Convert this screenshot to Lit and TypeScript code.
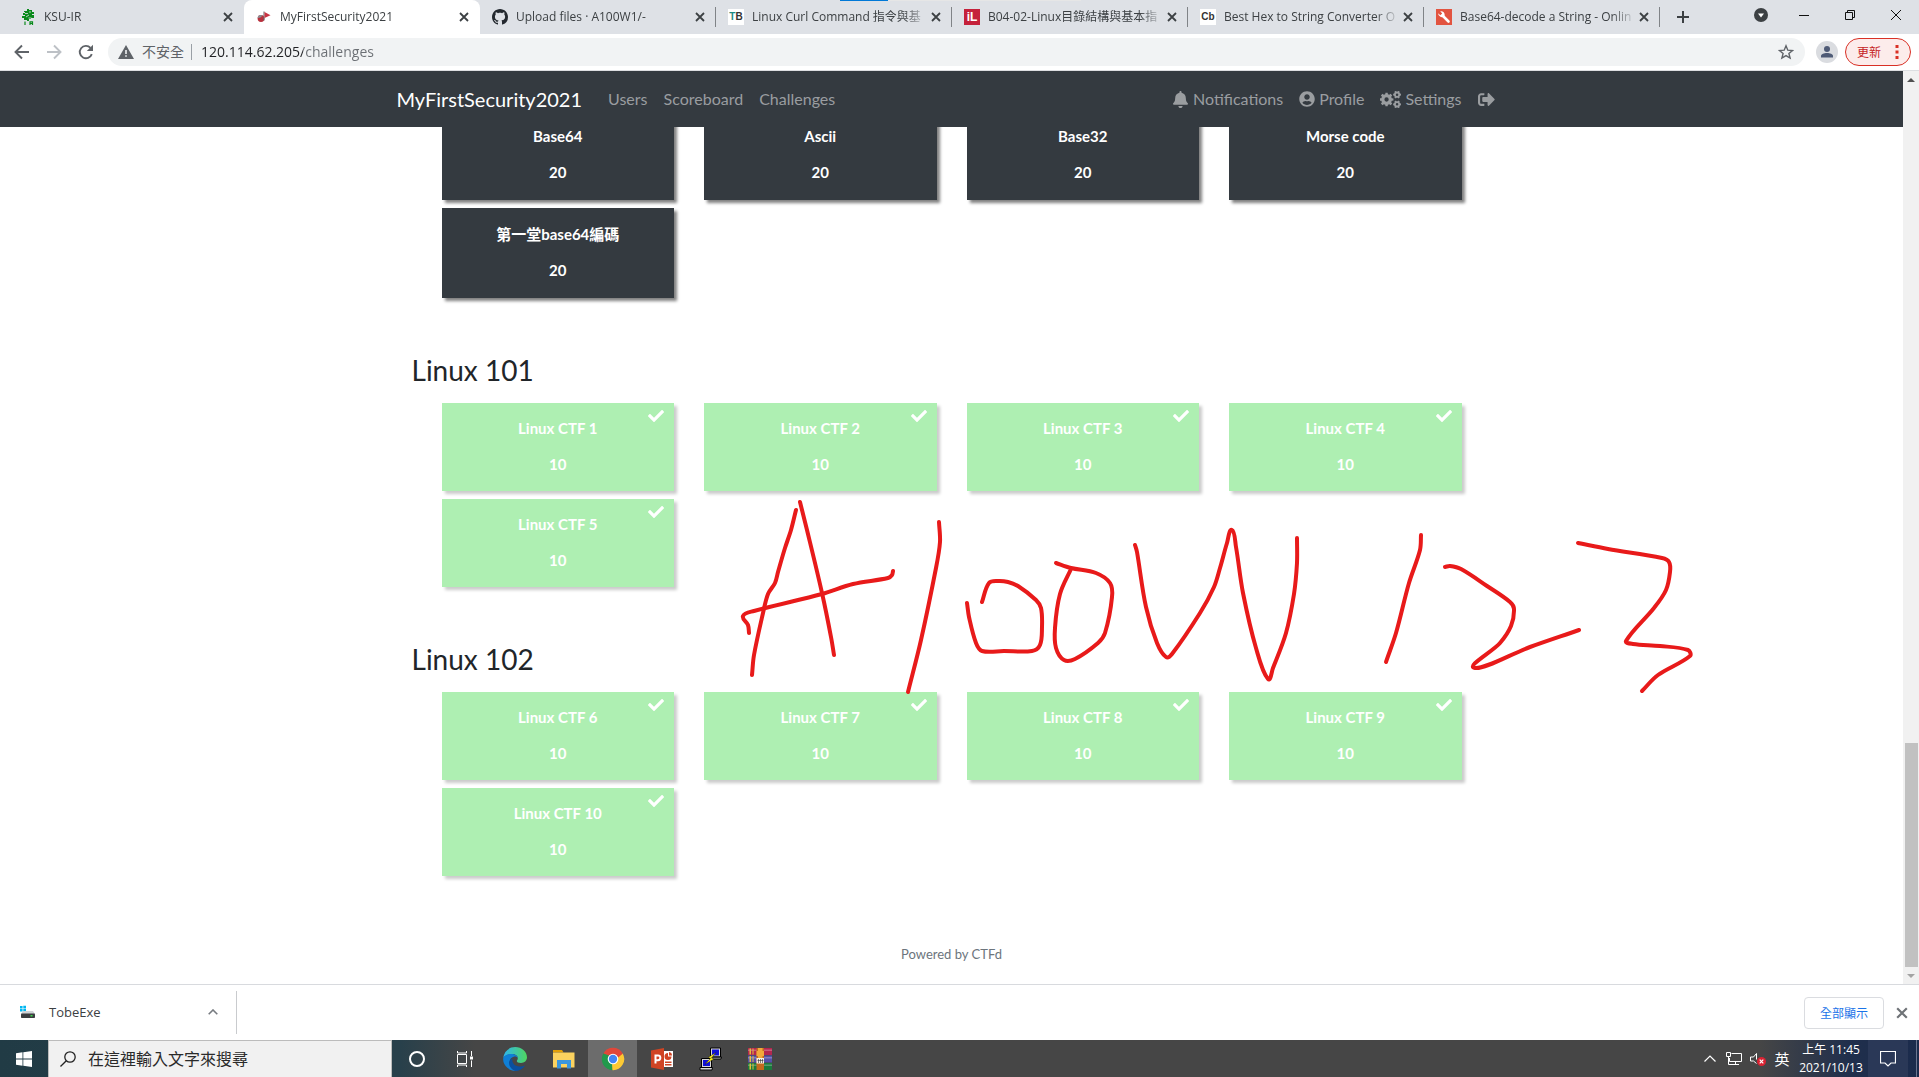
import { LitElement, html, css, svg, nothing, TemplateResult } from "lit";
import { customElement, property } from "lit/decorators.js";

interface Tab {
  title: string;
  icon: TemplateResult;
  active?: boolean;
}

interface Challenge {
  name: string;
  value: number;
  solved: boolean;
}

interface Category {
  title: string;
  challenges: Challenge[];
}

/** Closed outline of a gear wheel, centred on cx, cy. */
function gear(cx: number, cy: number, outer: number, inner: number, teeth: number): string {
  const points: string[] = [];
  const step = (Math.PI * 2) / teeth;
  for (let i = 0; i < teeth; i++) {
    const a = i * step;
    for (const [offset, r] of [[-0.32, inner], [-0.2, outer], [0.2, outer], [0.32, inner]]) {
      const t = a + offset * step;
      points.push(`${(cx + Math.cos(t) * r).toFixed(1)} ${(cy + Math.sin(t) * r).toFixed(1)}`);
    }
  }
  return `M${points.join("L")}Z`;
}

function hole(cx: number, cy: number, r: number): string {
  return `M${cx - r} ${cy}a${r} ${r} 0 1 0 ${2 * r} 0a${r} ${r} 0 1 0 ${-2 * r} 0Z`;
}

function icon(viewBox: string, width: number, height: number, body: unknown): TemplateResult {
  return html`<svg viewBox=${viewBox} width=${width} height=${height} aria-hidden="true">${body}</svg>`;
}

const closeIcon = (size: number) =>
  icon("0 0 10 10", size, size, svg`<path d="M1 1L9 9M9 1L1 9" fill="none" stroke="currentColor" stroke-width="1.8"/>`);

const bell = icon("0 0 448 512", 17, 17, svg`<path fill="currentColor" d="M224 512c35.32 0 63.97-28.65 63.97-64H160.03c0 35.35 28.65 64 63.97 64zm215.39-149.71c-19.32-20.76-55.47-51.99-55.47-154.29 0-77.7-54.48-139.9-127.94-155.16V32c0-17.67-14.32-32-31.98-32s-31.98 14.33-31.98 32v20.84C118.56 68.1 64.08 130.3 64.08 208c0 102.3-36.15 133.53-55.47 154.29-6 6.45-8.66 14.16-8.61 21.71.11 16.4 12.98 32 32.1 32h383.8c19.12 0 32-15.6 32.1-32 .05-7.55-2.61-15.27-8.61-21.71z"/>`);

const userCircle = icon("0 0 496 512", 16, 16, svg`<path fill="currentColor" d="M248 8C111 8 0 119 0 256s111 248 248 248 248-111 248-248S385 8 248 8zm0 96c48.6 0 88 39.4 88 88s-39.4 88-88 88-88-39.4-88-88 39.4-88 88-88zm0 344c-58.7 0-111.3-26.6-146.5-68.2 18.8-35.4 55.6-59.8 98.5-59.8 2.4 0 4.8.4 7.1 1.1 13 4.2 26.6 6.9 40.9 6.9 14.3 0 28-2.7 40.9-6.9 2.3-.7 4.7-1.1 7.1-1.1 42.9 0 79.7 24.4 98.5 59.8C359.3 421.4 306.7 448 248 448z"/>`);

const cogs = icon("0 0 640 512", 21, 17, svg`<path fill="currentColor" fill-rule="evenodd" d="${gear(200, 256, 212, 164, 8)}${hole(200, 256, 66)}${gear(520, 108, 122, 96, 6)}${hole(520, 108, 38)}${gear(520, 404, 122, 96, 6)}${hole(520, 404, 38)}"/>`);

const signOut = icon("0 0 512 512", 17, 17, svg`<path fill="currentColor" d="M497 273L329 441c-15 15-41 4.5-41-17v-96H152c-13.3 0-24-10.7-24-24v-96c0-13.3 10.7-24 24-24h136V88c0-21.4 25.9-32 41-17l168 168c9.3 9.4 9.3 24.6 0 34zM192 436v-40c0-6.6-5.4-12-12-12H96c-17.7 0-32-14.3-32-32V160c0-17.7 14.3-32 32-32h84c6.6 0 12-5.4 12-12V76c0-6.6-5.4-12-12-12H96c-53 0-96 43-96 96v192c0 53 43 96 96 96h84c6.6 0 12-5.4 12-12z"/>`);

const check = icon("0 0 512 512", 16, 16, svg`<path fill="currentColor" d="M173.898 439.404l-166.4-166.4c-9.997-9.997-9.997-26.206 0-36.204l36.203-36.204c9.997-9.998 26.207-9.998 36.204 0L192 312.69 432.095 72.596c9.997-9.997 26.207-9.997 36.204 0l36.203 36.204c9.997 9.997 9.997 26.206 0 36.204l-294.4 294.401c-9.998 9.997-26.207 9.997-36.204-.001z"/>`);

const pineIcon = icon("0 0 16 16", 16, 16, svg`
  <path fill="#0a8a1c" d="M7 0h2v1h3v2h2v2h-2v1h2v3h-3v1H9v2H7v-1H4V9H2V7h3V6H3V4h2V3H4V2h3z"/>
  <path stroke="#dee1e6" stroke-width=".8" d="M5 4.500h3M9 3h2M6 8l3-2M8.500 9h3" fill="none"/>
  <path stroke="#0a8a1c" stroke-width="1.200" fill="none" d="M5 12.500V16M10 16v-3.200h2.500V16M10 14.500h2.500"/>`);

const flagIcon = icon("0 0 16 16", 16, 16, svg`
  <circle cx="5" cy="9.500" r="3.400" fill="#b8303c"/>
  <path d="M1.600 9a3.400 3.400 0 0 1 5-2.600L4.500 8.500z" fill="#8b9095"/>
  <path d="M8 2.500v9" stroke="#666" stroke-width="1"/>
  <path d="M8.500 3L14.500 6.300 8.500 9z" fill="#c93443"/>`);

const githubIcon = icon("0 0 16 16", 16, 16, svg`<path fill="#24292f" d="M8 0C3.580 0 0 3.580 0 8c0 3.540 2.290 6.530 5.470 7.590.4.070.550-.170.550-.380 0-.190-.010-.820-.010-1.490-2.010.370-2.530-.490-2.690-.940-.090-.230-.480-.940-.820-1.130-.280-.150-.680-.520-.010-.530.630-.010 1.080.580 1.230.820.720 1.210 1.870.870 2.330.660.070-.520.280-.870.510-1.070-1.780-.200-3.640-.890-3.640-3.950 0-.870.310-1.590.820-2.150-.080-.200-.360-1.020.080-2.120 0 0 .670-.210 2.200.820.640-.180 1.320-.270 2-.270s1.360.090 2 .270c1.530-1.040 2.200-.820 2.200-.820.440 1.100.160 1.920.080 2.120.510.560.820 1.270.820 2.150 0 3.070-1.870 3.750-3.650 3.950.290.250.540.730.540 1.480 0 1.070-.010 1.930-.010 2.200 0 .210.150.460.550.380A8.010 8.010 0 0 0 16 8c0-4.420-3.580-8-8-8z"/>`);

const wrenchIcon = icon("0 0 16 16", 16, 16, svg`<path fill="#e25440" d="M0 0h16v16H0z"/><path d="M7 7l5.500 5.500" stroke="#fff" stroke-width="2.600" stroke-linecap="round"/><path fill="#fff" d="M2.200 4.200L4.300 6.300 6.200 4.400 4.200 2.300a3.600 3.600 0 0 1 4.300 4.600A3.600 3.600 0 0 1 2.200 4.200z"/>`);

const tabs: Tab[] = [
  { title: "KSU-IR", icon: pineIcon },
  { title: "MyFirstSecurity2021", icon: flagIcon, active: true },
  { title: "Upload files · A100W1/-", icon: githubIcon },
  { title: "Linux Curl Command 指令與基", icon: html`<span class="letters tb"><i>T</i>B</span>` },
  { title: "B04-02-Linux目錄結構與基本指", icon: html`<span class="letters il">iL</span>` },
  { title: "Best Hex to String Converter O", icon: html`<span class="letters cb">Cb</span>` },
  { title: "Base64-decode a String - Onlin", icon: wrenchIcon },
];

const linux = (from: number, to: number): Challenge[] =>
  Array.from({ length: to - from + 1 }, (_, i) => ({ name: `Linux CTF ${from + i}`, value: 10, solved: true }));

const encoding: Challenge[] = ["Base64", "Ascii", "Base32", "Morse code", "第一堂base64編碼"].map((name) => ({
  name,
  value: 20,
  solved: false,
}));

const categories: Category[] = [
  { title: "", challenges: encoding },
  { title: "Linux 101", challenges: linux(1, 5) },
  { title: "Linux 102", challenges: linux(6, 10) },
];

/** Pen strokes: each list is the points one stroke passes through. */
const strokes: number[][][] = [
  [[796, 510], [791, 530], [785, 548], [778, 572], [775, 583], [768, 594], [763, 613], [754, 655], [752, 675]],
  [[800, 502], [807, 530], [822, 593], [831, 637], [834, 655]],
  [[749, 633], [748, 625], [743, 616], [754, 611], [822, 594], [853, 584], [888, 578], [892, 575], [893, 571]],
  [[939, 522], [940, 542], [936, 568], [921, 640], [908, 692]],
  [[967, 603], [969, 617], [976, 643], [982, 651], [1004, 651], [1032, 651], [1040, 645], [1042, 627], [1041, 608], [1036, 600], [1018, 586], [1008, 582], [998, 581], [989, 583], [982, 602]],
  [[1056, 563], [1071, 568], [1096, 573], [1110, 583], [1112, 597], [1105, 633], [1098, 643], [1075, 659], [1064, 660], [1056, 648], [1055, 628], [1060, 594], [1071, 569]],
  [[1135, 545], [1137, 552], [1146, 607], [1157, 643], [1166, 657], [1172, 654], [1200, 613], [1214, 587], [1220, 568], [1227, 543], [1232, 530], [1236, 547], [1243, 593], [1256, 648], [1268, 679], [1273, 668], [1286, 633], [1294, 594], [1297, 563], [1297, 538]],
  [[1421, 535], [1420, 550], [1409, 583], [1396, 633], [1386, 662]],
  [[1445, 567], [1450, 566], [1461, 569], [1487, 586], [1510, 602], [1514, 609], [1511, 626], [1500, 643], [1475, 668], [1530, 647], [1579, 630]],
  [[1578, 543], [1608, 549], [1662, 558], [1669, 562], [1670, 572], [1666, 590], [1654, 608], [1626, 641], [1633, 644], [1660, 646], [1688, 650], [1690, 656], [1658, 675], [1642, 691]],
];

/** Catmull-Rom spline through the points, written as cubic segments. */
function spline(p: number[][]): string {
  let d = `M${p[0][0]} ${p[0][1]}`;
  for (let i = 0; i < p.length - 1; i++) {
    const [a, b, c, e] = [p[i - 1] ?? p[i], p[i], p[i + 1], p[i + 2] ?? p[i + 1]];
    const len = Math.hypot(c[0] - b[0], c[1] - b[1]);
    const t1 = Math.min(1, len / (Math.hypot(c[0] - a[0], c[1] - a[1]) || 1)) / 3;
    const t2 = Math.min(1, len / (Math.hypot(e[0] - b[0], e[1] - b[1]) || 1)) / 3;
    const c1 = [b[0] + (c[0] - a[0]) * t1, b[1] + (c[1] - a[1]) * t1];
    const c2 = [c[0] - (e[0] - b[0]) * t2, c[1] - (e[1] - b[1]) * t2];
    d += `C${[...c1, ...c2, ...c].map((v) => v.toFixed(1)).join(" ")}`;
  }
  return d;
}

const uiFont = css`"Open Sans", "Noto Sans CJK TC", sans-serif`;

@customElement("browser-chrome")
export class BrowserChrome extends LitElement {
  static styles = css`
    :host { display: block; font-family: ${uiFont}; font-size: 12px; color: #3c4043; }
    svg { display: block; flex: none; }
    button { border: 0; padding: 0; background: none; color: inherit; font: inherit; display: flex; align-items: center; justify-content: center; }
    .strip { display: flex; height: 34px; background: #dee1e6; position: relative; }
    .progress { position: absolute; left: 840px; top: 0; width: 241px; height: 1px; background: linear-gradient(to right, #0078d7 48px, #e6e6e6 48px); }
    .tab { flex: 0 1 236px; min-width: 0; box-sizing: border-box; display: flex; align-items: center; padding: 0 8px 0 12px; position: relative; }
    .tab:first-child { flex-basis: 244px; padding-left: 20px; }
    .tab.ruled::after { content: ""; position: absolute; right: 0; top: 7px; width: 1px; height: 20px; background: #808387; }
    .tab.active { background: #fff; border-radius: 8px 8px 0 0; }
    .label { flex: 1; min-width: 0; margin-left: 8px; line-height: 20px; white-space: nowrap; overflow: hidden; mask-image: linear-gradient(to right, #000 86%, transparent); }
    .close { width: 16px; height: 16px; }
    .letters { width: 16px; height: 16px; flex: none; background: #fff; font: bold 10px/16px "Liberation Sans", sans-serif; text-align: center; color: #333; }
    .letters i { color: #1d8a84; font-style: normal; }
    .letters.il { background: #c5213b; color: #fff; font-size: 12px; }
    .add { width: 46px; }
    .window { margin-left: auto; display: flex; align-items: center; padding-bottom: 4px; color: #111; }
    .window button { width: 46px; height: 28px; }
    .window .menu { width: 40px; }
    .toolbar { display: flex; align-items: center; height: 36px; background: #fff; border-bottom: 1px solid #dcdee1; color: #5f6368; padding-right: 8px; }
    .nav { width: 32px; height: 28px; }
    .nav:first-child { margin-left: 6px; }
    .nav.off { color: #bdc1c6; }
    .address { flex: 1; margin-left: 6px; height: 28px; border-radius: 14px; background: #f1f3f4; display: flex; align-items: center; padding: 0 11px 0 10px; }
    .unsafe { font-size: 14px; line-height: 20px; margin: 0 7px 0 8px; }
    .bar { width: 1px; height: 16px; background: #9aa0a6; margin-right: 9px; }
    .url { flex: 1; min-width: 0; border: 0; padding: 0; outline: 0; height: 20px; font: 14px/20px ${uiFont}; color: #202124; background: linear-gradient(to right, #202124 102px, #6b6f74 102px) text; -webkit-text-fill-color: transparent; }
    .avatar { width: 22px; height: 22px; border-radius: 50%; background: #dadce0; margin: 0 7px 0 11px; }
    .update { box-sizing: border-box; height: 28px; width: 66px; border: 1px solid #d93025; border-radius: 14px; background: #fceceb; color: #c5221f; gap: 14px; }
  `;

  render() {
    return html`
      <div class="strip">
        ${tabs.map(
          (t, i) => html`<div class="tab ${t.active ? "active" : ""} ${i > 1 ? "ruled" : ""}">
            ${t.icon}<span class="label">${t.title}</span>
            <button class="close" aria-label="Close tab">${closeIcon(10)}</button>
          </div>`
        )}
        <button class="add" aria-label="New tab">${icon("0 0 12 12", 12, 12, svg`<path d="M6 0V12M0 6H12" stroke="currentColor" stroke-width="2"/>`)}</button>
        <div class="window">
          <button class="menu" aria-label="Search tabs">${icon("0 0 14 14", 14, 14, svg`<circle cx="7" cy="7" r="7" fill="#3c4043"/><path d="M4 5.500h6L7 9.500z" fill="#fff"/>`)}</button>
          <button aria-label="Minimize">${icon("0 0 10 10", 10, 10, svg`<path d="M0 5.500H10" stroke="currentColor"/>`)}</button>
          <button aria-label="Restore">${icon("0 0 10 10", 10, 10, svg`<path d="M.5 2.500h7v7h-7zM2.500 2.500V.5h7v7h-2" fill="none" stroke="currentColor"/>`)}</button>
          <button aria-label="Close">${icon("0 0 10 10", 10, 10, svg`<path d="M0 0L10 10M10 0L0 10" stroke="currentColor"/>`)}</button>
        </div>
        <div class="progress"></div>
      </div>
      <div class="toolbar">
        <button class="nav" aria-label="Back">${icon("0 0 16 16", 16, 16, svg`<path d="M15 8H2M8 1.500L1.500 8 8 14.500" fill="none" stroke="currentColor" stroke-width="1.900"/>`)}</button>
        <button class="nav off" aria-label="Forward">${icon("0 0 16 16", 16, 16, svg`<path d="M1 8H14M8 1.500L14.500 8 8 14.500" fill="none" stroke="currentColor" stroke-width="1.900"/>`)}</button>
        <button class="nav" aria-label="Reload">${icon("0 0 16 16", 16, 16, svg`<path d="M13.800 10.200A6.200 6.200 0 1 1 12.500 3.800" fill="none" stroke="currentColor" stroke-width="1.900"/><path d="M15 .8V7H8.800z" fill="currentColor"/>`)}</button>
        <div class="address">
          ${icon("0 0 16 14", 16, 14, svg`<path fill="currentColor" fill-rule="evenodd" d="M8 0L16 14H0zM7.200 5v4h1.600V5zM7.200 10.200v1.600h1.600v-1.600z"/>`)}
          <span class="unsafe">不安全</span><span class="bar"></span>
          <input class="url" aria-label="Address" value="120.114.62.205/challenges" />
          <button aria-label="Bookmark">${icon("0 0 16 16", 16, 16, svg`<path d="M8 1.800l1.800 4.400 4.700.3-3.600 3 1.200 4.600L8 11.600l-4.100 2.500 1.200-4.600-3.600-3 4.700-.3z" fill="none" stroke="currentColor" stroke-width="1.400"/>`)}</button>
        </div>
        <button class="avatar" aria-label="Account">${icon("0 0 14 14", 14, 14, svg`<circle cx="7" cy="4" r="3" fill="#4f5b76"/><path d="M1 12.500V11c0-2 3-3 6-3s6 1 6 3v1.500z" fill="#4f5b76"/>`)}</button>
        <button class="update">更新${icon("0 0 4 14", 4, 14, svg`<path fill="#d93025" d="M.5 0h3v3h-3zM.5 5.500h3v3h-3zM.5 11h3v3h-3z"/>`)}</button>
      </div>`;
  }
}

@customElement("challenge-card")
export class ChallengeCard extends LitElement {
  @property() name = "";
  @property({ type: Number }) value = 0;
  @property({ type: Boolean }) solved = false;

  static styles = css`
    :host { display: block; }
    .card { width: 100%; box-sizing: border-box; position: relative; display: flex; flex-direction: column; gap: 15px; padding: 15px 16px 16px; border: 1px solid #343a40; border-radius: 0; background: #343a40; color: #fff; box-shadow: 3px 3px 3px grey; font: bold 15px/21px Lato, "Noto Sans CJK TC", sans-serif; text-align: center; }
    .card.solved { border: 0; background: #aeefb2; box-shadow: 3px 3px 3px #cbcbcb; }
    .line { display: block; }
    .mark { position: absolute; right: 10px; top: 5px; }
    svg { display: block; }
  `;

  render() {
    return html`<button class="card ${this.solved ? "solved" : ""}">
      ${this.solved ? html`<span class="mark">${check}</span>` : nothing}
      <span class="line">${this.name}</span><span class="line">${this.value}</span>
    </button>`;
  }
}

@customElement("ctf-page")
export class CtfPage extends LitElement {
  static styles = css`
    :host { display: flex; min-height: 0; background: #fff; font-family: Lato, "Noto Sans CJK TC", sans-serif; color: #212529; }
    svg { display: block; }
    .view { flex: 1; min-width: 0; display: flex; flex-direction: column; }
    .navbar { flex: none; background: #343a40; position: relative; z-index: 1; }
    .inner { max-width: 1110px; margin: 0 auto; height: 56px; padding: 0 15px; display: flex; align-items: center; }
    a { text-decoration: none; }
    .brand { font-size: 20px; line-height: 30px; color: #fff; margin-right: 18px; }
    .link { display: flex; align-items: center; gap: 4px; padding: 8px; font-size: 16px; line-height: 24px; color: #9a9da0; }
    .right { margin-left: auto; display: flex; padding-right: 4px; }
    .scroll { flex: 1; min-height: 0; overflow: hidden; display: flex; flex-direction: column; justify-content: flex-end; }
    .content { width: 100%; max-width: 1080px; margin: 0 auto; flex: none; }
    .heading { margin: 55px 0 16px; font-size: 28px; line-height: 34px; font-weight: 400; }
    .cards { display: grid; grid-template-columns: repeat(4, 1fr); gap: 8px 30px; padding: 0 30px; }
    .footer { flex: none; margin: 68px 0 20px; text-align: center; font-size: 13px; line-height: 20px; }
    .footer a { color: #6c757d; }
    .scrollbar { flex: none; width: 16px; background: #f1f1f1; display: flex; flex-direction: column; align-items: center; }
    .arrow { height: 17px; display: flex; align-items: center; }
    .space { flex: 655; }
    .thumb { flex: 224; width: 13px; background: #c1c1c1; }
  `;

  render() {
    return html`
      <div class="view">
        <nav class="navbar">
          <div class="inner">
            <a class="brand" href="#">MyFirstSecurity2021</a>
            <a class="link" href="#users">Users</a>
            <a class="link" href="#scoreboard">Scoreboard</a>
            <a class="link" href="#challenges">Challenges</a>
            <div class="right">
              <a class="link" href="#notifications">${bell}Notifications</a>
              <a class="link" href="#profile">${userCircle}Profile</a>
              <a class="link" href="#settings">${cogs}Settings</a>
              <a class="link" href="#logout" aria-label="Logout">${signOut}</a>
            </div>
          </div>
        </nav>
        <div class="scroll">
          <main class="content">
            ${categories.map(
              (c) => html`<section>
                ${c.title ? html`<h3 class="heading">${c.title}</h3>` : nothing}
                <div class="cards">
                  ${c.challenges.map(
                    (ch) => html`<challenge-card .name=${ch.name} .value=${ch.value} .solved=${ch.solved}></challenge-card>`
                  )}
                </div>
              </section>`
            )}
          </main>
          <footer class="footer"><a href="#ctfd">Powered by CTFd</a></footer>
        </div>
      </div>
      <div class="scrollbar" aria-hidden="true">
        <span class="arrow">${icon("0 0 8 4", 8, 4, svg`<path d="M4 0L8 4H0z" fill="#505050"/>`)}</span>
        <span class="space"></span><span class="thumb"></span>
        <span class="arrow">${icon("0 0 8 4", 8, 4, svg`<path d="M4 4L8 0H0z" fill="#a3a3a3"/>`)}</span>
      </div>`;
  }
}

@customElement("download-shelf")
export class DownloadShelf extends LitElement {
  static styles = css`
    :host { display: flex; align-items: center; height: 55px; border-top: 1px solid #d8dade; background: #fff; font-family: ${uiFont}; font-size: 12px; color: #3c4043; }
    svg { display: block; flex: none; }
    button { border: 0; background: none; padding: 0; font: inherit; color: inherit; display: flex; align-items: center; }
    .item { width: 237px; box-sizing: border-box; height: 43px; padding: 0 18px 2px 20px; border-right: 1px solid #c9cbce; }
    .name { flex: 1; text-align: left; margin-left: 13px; font-size: 13px; }
    .all { margin-left: auto; box-sizing: border-box; width: 80px; height: 32px; border: 1px solid #dadce0; border-radius: 4px; color: #1a73e8; justify-content: center; }
    .close { margin: 0 11px 0 12px; color: #6f7377; }
  `;

  render() {
    return html`
      <button class="item">
        ${icon("0 0 16 14", 16, 14, svg`<path fill="#00b7f1" d="M0 1h2.600v2.400H0zM3.300 .7H6v2.700H3.300zM0 4h2.600v2.400H0zM3.300 4H6v2.700H3.300z"/><path d="M3 6h10l2 3H1z" fill="#cfd2d6"/><rect x="1" y="8.500" width="14" height="4.500" rx=".8" fill="#3b3d40"/><rect x="10.500" y="10" width="2" height="1.500" fill="#3ddc4a"/>`)}
        <span class="name">TobeExe</span>
        ${icon("0 0 10 6", 10, 6, svg`<path d="M.7 5.300L5 1l4.300 4.300" fill="none" stroke="#777b80" stroke-width="1.600"/>`)}
      </button>
      <button class="all">全部顯示</button>
      <button class="close" aria-label="Close">${closeIcon(12)}</button>`;
  }
}

const apps: { name: string; on?: boolean; art: TemplateResult }[] = [
  { name: "Cortana", art: icon("0 0 24 24", 24, 24, svg`<circle cx="12" cy="12" r="7" fill="none" stroke="#fff" stroke-width="2"/>`) },
  { name: "Task View", art: icon("0 0 24 24", 24, 24, svg`<path d="M3.500 7.500h9v9h-9zM3.500 4v2h9V4M3.500 20v-2h9v2M17.500 4v5M17.500 13.500V20" fill="none" stroke="#fff"/><path d="M16 9.500h3v3h-3z" fill="#fff"/>`) },
  { name: "Edge", art: icon("0 0 24 24", 24, 24, svg`
      <defs><linearGradient id="a" x1="0" x2="1"><stop offset="0" stop-color="#2fb5ee"/><stop offset="1" stop-color="#4fd65f"/></linearGradient></defs>
      <path fill="url(#a)" d="M.2 11C1 4.500 6 0 12.200 0 18.500 0 24 4.500 24 10.300c0 3.500-2.700 5.700-6 5.700-2.700 0-4.200-1-4.200-2 0-.7 1-1 1-3 0-2.200-2.500-4-5.500-4C5 7 1.500 9 .2 11z"/>
      <path fill="#0f7fd6" d="M.1 12C.8 8.500 4.500 7 8.500 7c3.500 0 6.300 1.700 6.300 4-1-1.200-2.500-1.600-4-1.300-2.800.6-4.300 3-4 5.800.4 3.800 3.700 7 7.700 8A12 12 0 0 1 .1 12z"/>
      <path fill="#0b4f9e" d="M9.500 11.500c-1 3.500 1.500 8 7.500 8 2.300 0 4-.6 5.200-1.300C20 22 16 24 12.500 24 9 23 6 19.500 6 15.800c0-2 1.300-3.600 3.500-4.300z"/>`) },
  { name: "File Explorer", art: icon("0 0 24 24", 24, 24, svg`<path fill="#e3a008" d="M1 3h9l1.500 2.500H1z"/><path fill="#fbd25f" d="M1 5.500h21.500V20.500H1z"/><path fill="#3a96dd" d="M5 13h14v8.500h-4V17H9v4.500H5z"/>`) },
  { name: "Chrome", on: true, art: icon("0 0 24 24", 24, 24, svg`
      <path fill="#e0473a" d="M12 12L2.300 6.400a11.200 11.200 0 0 1 19.400 0z"/>
      <path fill="#fcc934" d="M12 12L21.700 6.400A11.200 11.200 0 0 1 11.500 23.200z"/>
      <path fill="#22994c" d="M12 12L11.500 23.200A11.200 11.200 0 0 1 2.300 6.400z"/>
      <path fill="#e0473a" d="M12 6.500h9.800l-4.600 4z"/><path fill="#fcc934" d="M17 14.500L11.500 23.200l-.5-6z"/><path fill="#22994c" d="M7 14.500L2.300 6.400 8 8.500z"/>
      <circle cx="12" cy="12" r="5.300" fill="#fff"/><circle cx="12" cy="12" r="4.200" fill="#4285f4"/>`) },
  { name: "PowerPoint", art: icon("0 0 24 24", 24, 24, svg`<path fill="#fff" d="M13 4h10v16H13z"/><path fill="#d04423" d="M1 3.500L14 1v22L1 20.500zM18 6v3.500h3.500a3.500 3.500 0 1 1-3.500-3.500zM19 5a3.500 3.500 0 0 1 3 3.500h-3zM15 14.500h6.500V16H15zM15 17h6.500v1.500H15z"/><path d="M5.500 16.500V8.500H8a2.300 2.300 0 0 1 0 4.700H5.500" fill="none" stroke="#fff" stroke-width="2"/>`) },
  { name: "PuTTY", art: icon("0 0 24 24", 24, 24, svg`<g stroke="#000" stroke-width="1"><path fill="#d8d8d8" d="M11.500 1h10v9h-10zM10 12l2-2h10.500l-.5 2zM2.500 11.500h10v9h-10zM1 23v-2.500h12.500L13 23z"/></g><path fill="#1010d8" d="M13 2.500h7V8.500h-7zM4 13h7v6H4z"/><path fill="#ffef1a" stroke="#111" stroke-width=".4" d="M17 5.500L9 10.500l2.500.8-5.500 6 9-5.300-2.500-1z"/>`) },
  { name: "WinRAR", art: icon("0 0 24 24", 24, 24, svg`<path fill="#b3264f" d="M0 1h24v7H0z"/><path fill="#5450a8" d="M0 8.500h24v7H0z"/><path fill="#1b7a3c" d="M0 16h24v7H0z"/><path fill="#fff" opacity=".25" d="M0 2.500h24V4H0zM0 10h24v1.500H0zM0 17.500h24V19H0z"/><path fill="#e2c03b" d="M1.500 1.500H3v6H1.500zM1.500 9H3v6H1.500zM1.500 16.500H3v6H1.500zM4.500 1.500h1v6h-1zM4.500 9h1v6h-1zM4.500 16.500h1v6h-1z"/><path fill="#c4691d" d="M8.500 1H16v22H8.500z"/><path fill="#f2a93b" d="M10 1h4.500v3H16v5h-1.500v3H10V9H8.500V4H10z"/><path fill="#f5f1e6" d="M8.500 11h7.500v5.500H8.500z"/><path stroke="#333" d="M10.500 12v4M12.500 12v4M14.500 12v4M9.500 13.500h6" stroke-width=".6"/>`) },
];

@customElement("task-bar")
export class TaskBar extends LitElement {
  static styles = css`
    :host { display: flex; height: 37px; color: #fff; font-family: ${uiFont}; background: linear-gradient(to right, #213b45 0, #28404b 400px, #464646 475px, #464646 calc(100% - 160px), #202f4c calc(100% - 70px), #1b2b4c); }
    svg { display: block; flex: none; }
    button { border: 0; background: none; padding: 0; color: inherit; font: inherit; display: flex; align-items: center; justify-content: center; }
    .start { width: 48px; }
    .search { width: 344px; box-sizing: border-box; display: flex; align-items: center; background: #f1f1f1; border: 1px solid #bcbcbc; border-bottom: 0; padding-left: 11px; color: #222; }
    .search input { flex: 1; min-width: 0; margin-left: 12px; padding: 0; border: 0; outline: 0; background: none; font: 16px/24px ${uiFont}; }
    .search input::placeholder { color: #2a2a2a; opacity: 1; }
    .app { width: 49px; }
    .app.on { background: #6c6c6c; }
    .tray { margin-left: auto; display: flex; align-items: stretch; }
    .tray button { width: 24px; }
    .lang { font-size: 15px; }
    .tray .clock { width: 74px; flex-direction: column; font-size: 12px; line-height: 18px; }
    .tray .notes { width: 40px; background: #2a3857; }
    .peek { width: 8px; border-right: 1px solid #6b7690; margin-right: 2px; }
  `;

  render() {
    return html`
      <button class="start" aria-label="Start">${icon("0 0 16 16", 16, 16, svg`<path fill="#fff" d="M0 2.200L6.500 1.300V7.600H0zM7.300 1.200L16 0v7.600H7.300zM0 8.400h6.500v6.300L0 13.800zM7.300 8.400H16V16l-8.700-1.200z"/>`)}</button>
      <label class="search">${icon("0 0 16 16", 16, 16, svg`<circle cx="10" cy="6" r="5.200" fill="none" stroke="#222" stroke-width="1.300"/><path d="M6.300 9.700L.5 15.500" stroke="#222" stroke-width="1.300"/>`)}
        <input aria-label="Search" placeholder="在這裡輸入文字來搜尋" /></label>
      ${apps.map((a) => html`<button class="app ${a.on ? "on" : ""}" aria-label=${a.name}>${a.art}</button>`)}
      <div class="tray">
        <button aria-label="Show hidden icons">${icon("0 0 12 7", 12, 7, svg`<path d="M.5 6.500L6 1l5.500 5.500" fill="none" stroke="#fff" stroke-width="1.200"/>`)}</button>
        <button aria-label="Network">${icon("0 0 16 14", 16, 14, svg`<path d="M5.500 1.500h10v8h-12V6M9.500 9.500v3M6 12.500h7M.5 .5h4v4h-4zM2.500 4.500v8h4" fill="none" stroke="#fff"/>`)}</button>
        <button aria-label="Volume muted">${icon("0 0 16 14", 16, 14, svg`<path d="M6.500 11.500L3.500 9h-3V5h3l3-3.500v6" fill="none" stroke="#fff"/><circle cx="11.500" cy="9.500" r="4.500" fill="#d92232"/><path d="M9.700 7.700l3.600 3.600M13.300 7.700l-3.600 3.600" stroke="#fff" stroke-width="1.200"/>`)}</button>
        <button class="lang">英</button>
        <button class="clock"><span>上午 11:45</span><span>2021/10/13</span></button>
        <button class="notes" aria-label="Notifications">${icon("0 0 16 16", 16, 16, svg`<path d="M.5 .5h15v11.500h-4.500L8 15l-3-3H.5z" fill="none" stroke="#fff" stroke-width="1.200"/>`)}</button>
        <span class="peek"></span>
      </div>`;
  }
}

@customElement("app-root")
export class AppRoot extends LitElement {
  static styles = css`
    :host { display: flex; flex-direction: column; height: 100vh; overflow: hidden; position: relative; }
    browser-chrome, download-shelf, task-bar { flex: none; }
    ctf-page { flex: 1; }
    .ink { position: absolute; left: 740px; top: 495px; pointer-events: none; }
  `;

  render() {
    return html`
      <browser-chrome></browser-chrome>
      <ctf-page></ctf-page>
      <download-shelf></download-shelf>
      <task-bar></task-bar>
      <svg class="ink" viewBox="740 495 960 205" width="960" height="205" fill="none" stroke="#e81a1a" stroke-width="4" stroke-linecap="round" stroke-linejoin="round" aria-hidden="true">
        ${strokes.map((s) => svg`<path d=${spline(s)}/>`)}
      </svg>`;
  }
}
